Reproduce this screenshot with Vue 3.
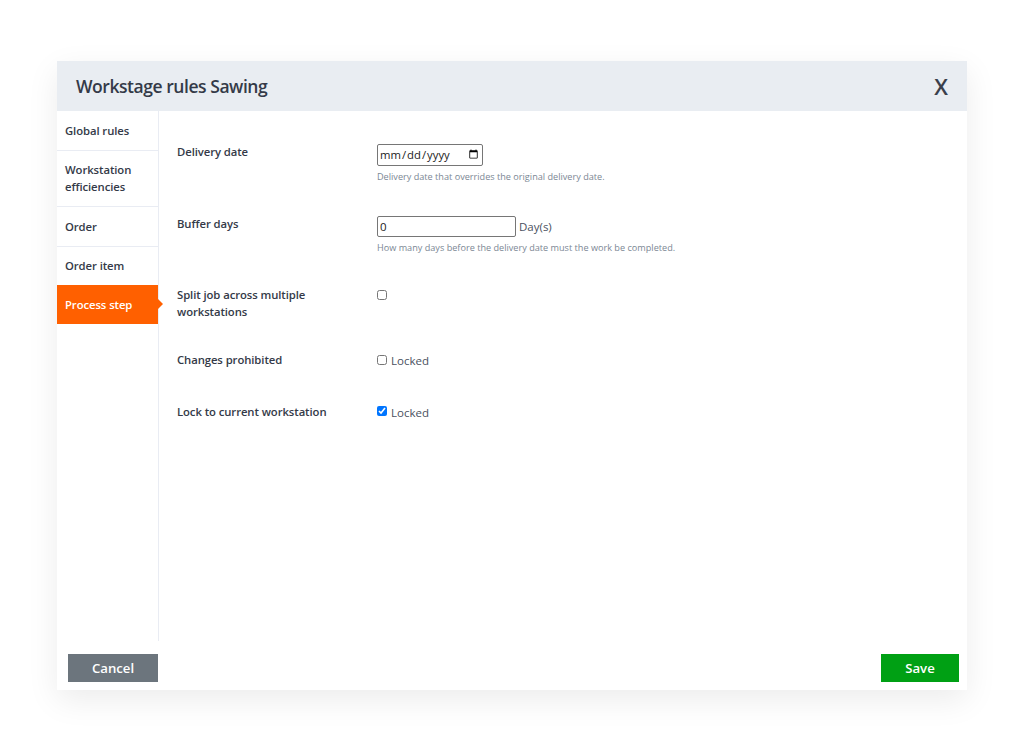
<script setup>
const tabs = [
  { label: 'Global rules' },
  { label: 'Workstation efficiencies' },
  { label: 'Order' },
  { label: 'Order item' },
  { label: 'Process step', active: true },
]
</script>

<template>
  <div class="page">
    <div class="modal">
      <header class="head">
        <h1 class="title">Workstage rules Sawing</h1>
        <span class="close">X</span>
      </header>
      <div class="body">
        <nav class="side">
          <a v-for="t in tabs" :key="t.label" class="tab" :class="{ active: t.active }">{{ t.label }}</a>
        </nav>
        <main class="form">
          <div class="row r1">
            <div class="label">Delivery date</div>
            <div class="ctl">
              <input class="date" type="date" />
              <div class="hint">Delivery date that overrides the original delivery date.</div>
            </div>
          </div>
          <div class="row r2">
            <div class="label">Buffer days</div>
            <div class="ctl">
              <div class="inline"><input class="num" type="text" value="0" /><span class="unit">Day(s)</span></div>
              <div class="hint">How many days before the delivery date must the work be completed.</div>
            </div>
          </div>
          <div class="row r3">
            <div class="label">Split job across multiple workstations</div>
            <div class="ctl"><input class="chk" type="checkbox" /></div>
          </div>
          <div class="row r4">
            <div class="label">Changes prohibited</div>
            <div class="ctl"><label class="lock"><input class="chk" type="checkbox" />Locked</label></div>
          </div>
          <div class="row r5">
            <div class="label">Lock to current workstation</div>
            <div class="ctl"><label class="lock"><input class="chk" type="checkbox" checked />Locked</label></div>
          </div>
        </main>
      </div>
      <footer class="foot">
        <button class="btn cancel">Cancel</button>
        <button class="btn save">Save</button>
      </footer>
    </div>
  </div>
</template>

<style>
html, body { margin: 0; background: #fff; }
</style>

<style scoped>
.page {
  box-sizing: border-box;
  width: 1024px;
  height: 751px;
  padding: 61px 57px;
  font-family: "Open Sans", "Liberation Sans", sans-serif;
  color: #343a48;
  overflow: hidden;
}
.modal {
  width: 910px;
  height: 629px;
  background: #fff;
  display: flex;
  flex-direction: column;
  box-shadow: 0 10px 30px rgba(0, 0, 0, 0.08);
}
.head {
  height: 50px;
  flex: none;
  background: #e9edf2;
  display: flex;
  align-items: center;
  justify-content: space-between;
  padding: 0 19px;
}
.title {
  margin: 0;
  font-size: 17.5px;
  font-weight: 600;
  letter-spacing: -0.45px;
  color: #343a48;
}
.close {
  font-size: 22px;
  font-weight: 600;
  color: #3a404c;
}
.body {
  height: 530px;
  flex: none;
  display: flex;
}
.side {
  width: 101px;
  flex: none;
  border-right: 1px solid #e9ecf3;
  display: flex;
  flex-direction: column;
  align-items: stretch;
}
.tab {
  position: relative;
  box-sizing: border-box;
  padding: 10.75px 8px 10.75px;
  font-size: 11.3px;
  font-weight: 600;
  letter-spacing: -0.08px;
  line-height: 17px;
  border-bottom: 1px solid #e9ecf3;
  color: #343a48;
}
.tab.active {
  background: #ff6000;
  color: #fff;
  border-bottom: 0;
  height: 39px;
  margin-top: -1px;
  padding-top: 11px;
}
.tab.active::after {
  content: "";
  position: absolute;
  left: 100%;
  top: 14px;
  border-left: 5px solid #ff6000;
  border-top: 5px solid transparent;
  border-bottom: 5px solid transparent;
}
.form {
  flex: 1;
  padding: 33px 19px 0 18px;
}
.row { display: flex; }
.label {
  width: 200px;
  flex: none;
  box-sizing: border-box;
  padding-right: 20px;
  margin-top: -1px;
  font-size: 11.3px;
  font-weight: 600;
  letter-spacing: -0.08px;
  line-height: 17px;
  color: #343a48;
}
.ctl { flex: 1; font-size: 12px; }
.date, .num {
  box-sizing: border-box;
  font-family: "Open Sans", sans-serif;
  font-size: 11.3px;
  color: #222;
  border: 1px solid #767676;
  border-radius: 2px;
  background: #fff;
  margin: 0;
  display: block;
}
.date { width: 106px; height: 22px; padding: 0 1px 2px; }
.date::-webkit-calendar-picker-indicator { position: relative; top: 1px; }
.num { width: 139px; height: 21px; padding: 0 2px; font-size: 11.5px; }
.inline { display: flex; align-items: center; gap: 3px; }
.unit { font-size: 11.5px; color: #4a5160; }
.hint {
  margin-top: 5px;
  font-size: 9.15px;
  line-height: 12px;
  color: #7b8794;
}
.r2 { margin-top: 33px; }
.r3 { margin-top: 33px; }
.r4 { margin-top: 32px; }
.r5 { margin-top: 35px; }
.chk {
  width: 10px;
  height: 10px;
  margin: 0;
  display: block;
  accent-color: #0075ff;
}
.r3 .chk { margin-top: 3px; }
.lock {
  display: flex;
  align-items: center;
  gap: 4px;
  font-size: 11.5px;
  line-height: 17px;
  color: #4a5160;
}
.lock .chk { margin-bottom: 2px; }
.r5 .lock .chk { margin-bottom: 4px; }
.foot {
  flex: 1;
  display: flex;
  align-items: flex-start;
  justify-content: space-between;
  padding: 13px 8px 0 11px;
}
.btn {
  border: 0;
  height: 28px;
  color: #fff;
  font-family: "Open Sans", sans-serif;
  font-size: 13.2px;
  font-weight: 600;
  padding: 0;
}
.cancel { width: 90px; background: #6c757d; }
.save { width: 78px; background: #00a014; }
</style>
